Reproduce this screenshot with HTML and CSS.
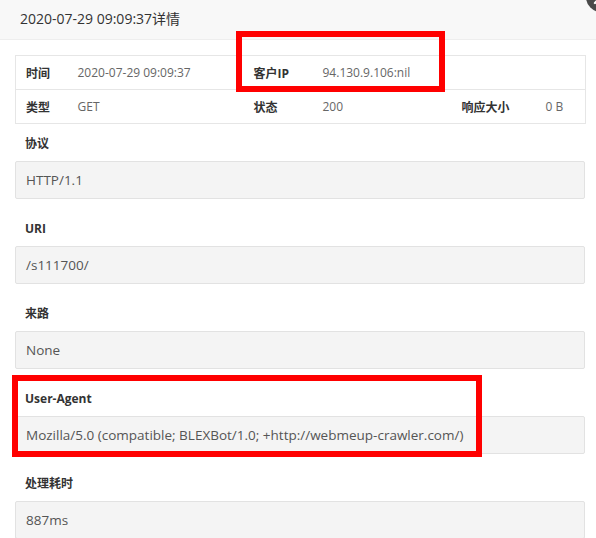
FILE: index.html
```html
<!DOCTYPE html>
<html lang="zh-CN">
<head>
    <meta charset="UTF-8">
    <meta name="viewport" content="width=device-width, initial-scale=1.0">
    <title>详情</title>
    <link rel="stylesheet" href="styles.css">
</head>
<body>
    <div class="layer">
        <div class="layer-title">2020-07-29 09:09:37详情</div>
        <span class="layer-close">
            <svg width="30" height="30" viewBox="0 0 30 30">
                <circle cx="15" cy="15" r="15" fill="#4a4a4a"/>
                <path d="M9 9 L21 21 M21 9 L9 21" stroke="#fff" stroke-width="2.4" stroke-linecap="round"/>
            </svg>
        </span>

        <div class="layer-content">
            <table class="info">
                <colgroup>
                    <col class="c1"><col class="c2"><col class="c3"><col class="c4"><col class="c5"><col class="c6">
                </colgroup>
                <tr>
                    <th>时间</th><td>2020-07-29 09:09:37</td>
                    <th>客户IP</th><td colspan="3">94.130.9.106:nil</td>
                </tr>
                <tr>
                    <th>类型</th><td>GET</td>
                    <th>状态</th><td>200</td>
                    <th>响应大小</th><td>0 B</td>
                </tr>
            </table>

            <div class="field">
                <label>协议</label>
                <div class="box">HTTP/1.1</div>
            </div>
            <div class="field">
                <label>URI</label>
                <div class="box">/s111700/</div>
            </div>
            <div class="field">
                <label>来路</label>
                <div class="box">None</div>
            </div>
            <div class="field">
                <label>User-Agent</label>
                <div class="box">Mozilla/5.0 (compatible; BLEXBot/1.0; +http://webmeup-crawler.com/)</div>
            </div>
            <div class="field">
                <label>处理耗时</label>
                <div class="box">887ms</div>
            </div>
        </div>

        <!-- red marks drawn over the screenshot -->
        <div class="mark mark-ip"></div>
        <div class="mark mark-ua"></div>
    </div>
</body>
</html>
```

FILE: styles.css
```css
* {
    padding: 0;
    margin: 0;
    box-sizing: border-box;
}
html, body {
    background: #fff;
    overflow: hidden;
}
body {
    font-family: "Open Sans", "Noto Sans CJK SC", sans-serif;
    font-size: 14px;
    color: #333;
}
.layer {
    position: relative;
    width: 596px;
    height: 538px;
}
.layer-title {
    height: 40px;
    line-height: 38px;
    padding-left: 20px;
    background: #f8f8f8;
    border-bottom: 1px solid #eee;
    color: #333;
    font-size: 14px;
}
.layer-close {
    position: absolute;
    left: 586px;
    top: -18px;
    width: 30px;
    height: 30px;
}
.layer-content {
    padding: 15px 11px 0 15px;
}
table.info {
    width: 570px;
    border-collapse: collapse;
    table-layout: fixed;
    border: 1px solid #e6e6e6;
    font-size: 12px;
}
col.c1 { width: 52px; }
col.c2 { width: 176px; }
col.c3 { width: 69px; }
col.c4 { width: 139px; }
col.c5 { width: 84px; }
col.c6 { width: 50px; }
table.info th, table.info td {
    height: 34px;
    padding: 0 0 0 10px;
    text-align: left;
    border-bottom: 1px solid #e6e6e6;
    white-space: nowrap;
}
table.info th {
    font-weight: bold;
    color: #333;
}
table.info td {
    color: #666;
}
.field label {
    display: block;
    padding: 10px 0 7px 10px;
    line-height: 20px;
    font-size: 12px;
    font-weight: bold;
    color: #333;
}
.field + .field {
    margin-top: 10px;
}
.box {
    height: 38px;
    line-height: 36px;
    width: 570px;
    padding-left: 10px;
    background: #f4f4f4;
    border: 1px solid #e2e2e2;
    border-radius: 2px;
    color: #555;
    font-size: 13.5px;
    white-space: nowrap;
}
.mark {
    position: absolute;
    border: 6px solid #ff0000;
}
.mark-ip {
    left: 236px;
    top: 31px;
    width: 209px;
    height: 61px;
}
.mark-ua {
    left: 12px;
    top: 375px;
    width: 470px;
    height: 82px;
}
```
